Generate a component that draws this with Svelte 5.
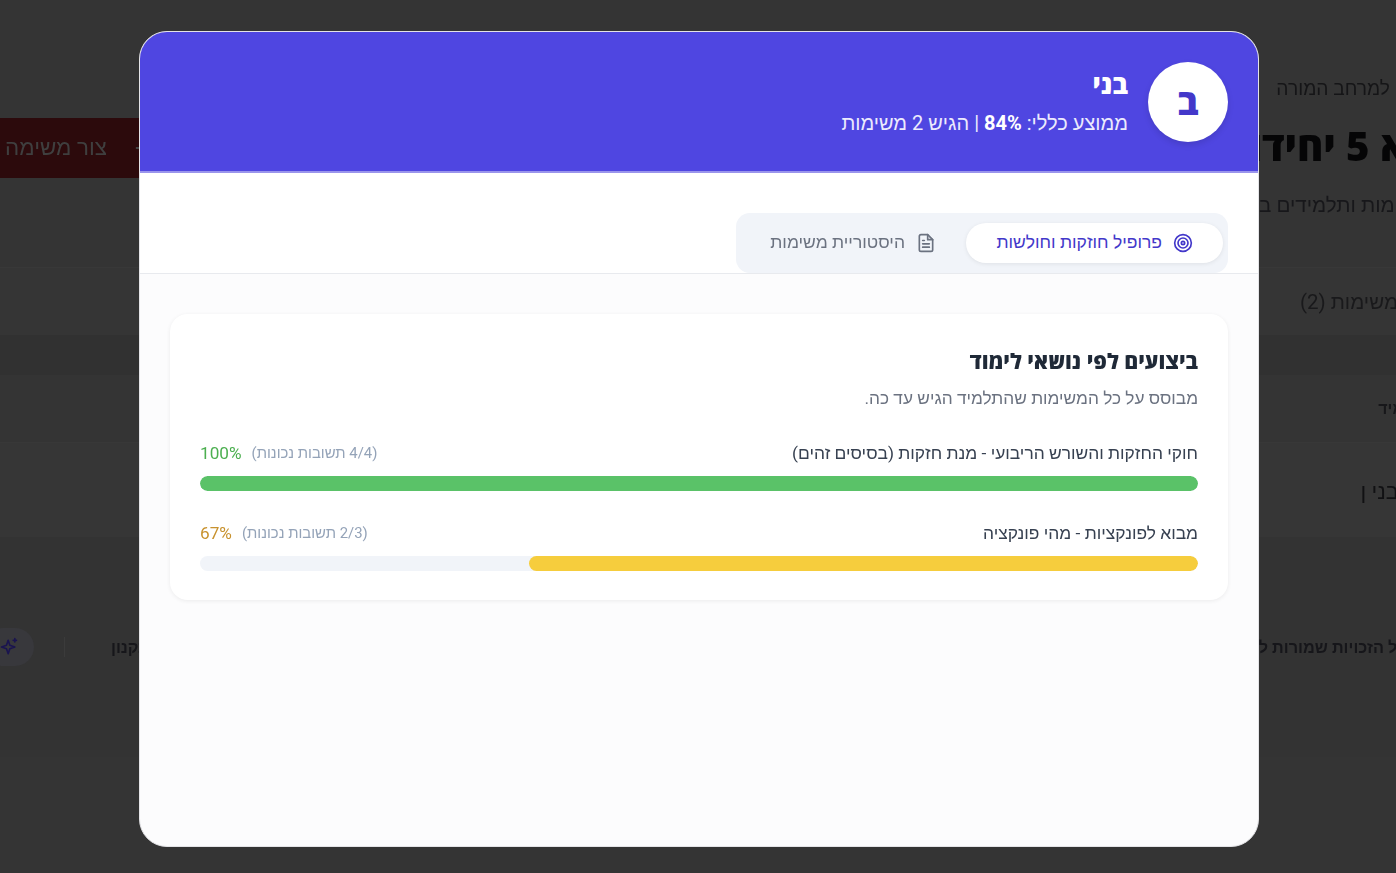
<script>
  const topics = [
    { name: "חוקי החזקות והשורש הריבועי - מנת חזקות (בסיסים זהים)", done: "4/4", pct: 100, tone: "good" },
    { name: "מבוא לפונקציות - מהי פונקציה", done: "2/3", pct: 67, tone: "mid" }
  ];
</script>

<div class="page" dir="rtl">
  <div class="back">למרחב המורה</div>
  <div class="title-row">
    <h1>כיתה יא 5 יחידות</h1>
    <div class="create"><span>צור משימה</span><span class="plus">+</span></div>
  </div>
  <p class="lead">ניהול משימות ותלמידים בכיתה</p>
  <div class="page-tabs">משימות (2)</div>
  <div class="strip"></div>
  <div class="table-head">תלמיד</div>
  <div class="table-row">בני ן</div>
  <div class="footer">
    <span class="rights">כל הזכויות שמורות ל</span>
    <div class="footer-links">
      <span>תקנון</span>
      <i class="sep"></i>
      <span class="spark">
        <svg viewBox="0 0 24 24" width="20" height="20" fill="none" stroke="currentColor" stroke-width="2" stroke-linejoin="round" stroke-linecap="round">
          <path d="M11 4l2 6 6 2-6 2-2 6-2-6-6-2 6-2z" />
          <path d="M19 2v4M17 4h4" />
        </svg>
      </span>
    </div>
  </div>
</div>

<div class="overlay" dir="rtl">
  <div class="modal">
    <header class="modal-head">
      <div class="avatar">ב</div>
      <div class="head-text">
        <h2>בני</h2>
        <p>ממוצע כללי: <b>84%</b> | הגיש 2 משימות</p>
      </div>
    </header>

    <div class="tabs-wrap">
      <div class="tabs">
        <div class="tab active">
          <svg viewBox="0 0 24 24" width="20" height="20" fill="none" stroke="currentColor" stroke-width="2">
            <circle cx="12" cy="12" r="10" />
            <circle cx="12" cy="12" r="6" />
            <circle cx="12" cy="12" r="2" />
          </svg>
          <span>פרופיל חוזקות וחולשות</span>
        </div>
        <div class="tab">
          <svg viewBox="0 0 24 24" width="20" height="20" fill="none" stroke="currentColor" stroke-width="2" stroke-linecap="round" stroke-linejoin="round">
            <path d="M14 2H6a2 2 0 0 0-2 2v16a2 2 0 0 0 2 2h12a2 2 0 0 0 2-2V8z" />
            <path d="M14 2v6h6" />
            <path d="M16 13H8M16 17H8M10 9H8" />
          </svg>
          <span>היסטוריית משימות</span>
        </div>
      </div>
    </div>

    <div class="modal-body">
      <section class="card">
        <h3>ביצועים לפי נושאי לימוד</h3>
        <p class="desc">מבוסס על כל המשימות שהתלמיד הגיש עד כה.</p>
        {#each topics as t}
          <div class="topic">
            <div class="topic-row">
              <span class="topic-name">{t.name}</span>
              <span class="topic-score">
                <span class="count">({t.done} תשובות נכונות)</span>
                <span class="pct {t.tone}">{t.pct}%</span>
              </span>
            </div>
            <div class="track"><div class="fill {t.tone}" style="width: {t.pct}%"></div></div>
          </div>
        {/each}
      </section>
    </div>
  </div>
</div>

<style>
  :global(body) {
    margin: 0;
    background: #343434;
    overflow: hidden;
    font-family: Roboto, "Noto Sans", sans-serif;
  }

  .page {
    height: 873px;
    overflow: hidden;
    color: #17171a;
    filter: blur(0.4px);
  }

  .back {
    padding: 78px 6px 0 0;
    font-size: 19.2px;
    line-height: 21px;
    color: #151517;
  }

  .title-row {
    display: flex;
    justify-content: space-between;
    align-items: center;
    height: 60px;
    margin: 19px -122px 0 0;
  }

  h1 {
    margin: 0 0 6px;
    font-family: "Open Sans", sans-serif;
    font-size: 40px;
    font-weight: 800;
    color: #050506;
  }

  .create {
    display: flex;
    align-items: center;
    gap: 20px;
    width: 200px;
    height: 60px;
    box-sizing: border-box;
    justify-content: flex-end;
    background: #2c0a0c;
    color: #3f3f3f;
    font-size: 22.4px;
    font-weight: 500;
  }

  .create span:first-child {
    margin-left: 5px;
    margin-top: -1px;
  }

  .create .plus {
    order: -1;
    font-weight: 400;
    margin-left: 8px;
    color: #444;
  }

  .lead {
    margin: 15px -80px 0 0;
    font-size: 20.6px;
    line-height: 24px;
    color: #17171a;
  }

  .page-tabs {
    margin-top: 50px;
    height: 68px;
    line-height: 68px;
    margin-right: -2px;
    border-top: 1px solid #383838;
    font-size: 20.5px;
    color: #19191b;
    background: #353535;
    box-sizing: border-box;
  }

  .strip {
    height: 40px;
    background: #313131;
  }

  .table-head {
    height: 68px;
    line-height: 68px;
    font-size: 16px;
    font-weight: 700;
    margin-right: -28px;
    background: #343434;
    border-bottom: 1px solid #383838;
    box-sizing: border-box;
    color: #17171a;
  }

  .table-row {
    height: 94px;
    line-height: 98px;
    font-size: 22px;
    margin-right: -3px;
    background: #363636;
    box-sizing: border-box;
    color: #111113;
  }

  .footer {
    display: flex;
    justify-content: space-between;
    align-items: center;
    height: 220px;
    background: #333333;
    color: #16161a;
    font-size: 16.3px;
    font-weight: 700;
    box-sizing: border-box;
  }

  .rights {
    margin-right: -10px;
  }

  .footer-links {
    display: flex;
    align-items: center;
    gap: 46px;
  }

  .sep {
    width: 1px;
    height: 20px;
    margin-left: -16px;
    background: #3b3b3b;
  }

  .spark {
    display: flex;
    align-items: center;
    justify-content: center;
    width: 50px;
    height: 38px;
    border-radius: 19px;
    background: #38383c;
    color: #1a1450;
    margin-left: -16px;
  }

  .overlay {
    position: fixed;
    inset: 0;
    display: flex;
    justify-content: center;
    align-items: flex-start;
    padding: 31px 0 0 2px;
    box-sizing: border-box;
  }

  .modal {
    width: 1120px;
    height: 816px;
    box-sizing: border-box;
    border: 1px solid #e4e4e7;
    border-radius: 28px;
    overflow: hidden;
    background: #fcfcfd;
    display: flex;
    flex-direction: column;
  }

  .modal-head {
    display: flex;
    align-items: center;
    gap: 20px;
    height: 141px;
    flex-shrink: 0;
    box-sizing: border-box;
    padding: 0 30px 0 0;
    background: #4f46e1;
    border-bottom: 2px solid #9a95ec;
    color: #fff;
  }

  .avatar {
    width: 80px;
    height: 80px;
    border-radius: 50%;
    background: #fff;
    color: #4338ca;
    display: flex;
    align-items: center;
    justify-content: center;
    font-family: "Open Sans", sans-serif;
    font-size: 36px;
    font-weight: 800;
    box-shadow: 0 3px 6px rgba(0, 0, 0, 0.12);
  }

  h2 {
    margin: 0 0 12px;
    font-family: "Open Sans", sans-serif;
    font-size: 26.5px;
    line-height: 30px;
    font-weight: 800;
  }

  .head-text p {
    margin: 0;
    font-size: 20px;
    line-height: 24px;
    color: #eceafd;
  }

  .head-text b {
    color: #fff;
  }

  .tabs-wrap {
    display: flex;
    height: 101px;
    flex-shrink: 0;
    box-sizing: border-box;
    padding: 40px 30px 0 0;
    background: #fff;
    border-bottom: 1px solid #e8eaee;
  }

  .tabs {
    display: flex;
    align-items: center;
    gap: 6px;
    width: 492px;
    height: 60px;
    box-sizing: border-box;
    padding: 0 5px;
    border-radius: 14px;
    background: #f1f4f9;
  }

  .tab {
    display: flex;
    align-items: center;
    gap: 11px;
    height: 40px;
    padding: 0 24px;
    font-size: 17.5px;
    white-space: nowrap;
    color: #6b7280;
  }

  .tab span {
    margin-top: -2px;
  }

  .tab.active {
    width: 257px;
    box-sizing: border-box;
    padding: 0 30px;
    border-radius: 20px;
    background: #fff;
    color: #4338ca;
    box-shadow: 0 1px 4px rgba(0, 0, 0, 0.08);
  }

  .modal-body {
    flex: 1;
    padding: 40px 30px;
  }

  .card {
    height: 286px;
    box-sizing: border-box;
    padding: 30px;
    border-radius: 18px;
    background: #fff;
    box-shadow: 0 1px 4px rgba(0, 0, 0, 0.07);
  }

  h3 {
    margin: 0 0 8px;
    font-family: "Open Sans", sans-serif;
    font-size: 21.3px;
    line-height: 34px;
    font-weight: 800;
    color: #1f2937;
  }

  .desc {
    margin: 0 0 31px;
    font-size: 17.3px;
    line-height: 24px;
    color: #6b7280;
  }

  .topic + .topic {
    margin-top: 30px;
  }

  .topic-row {
    display: flex;
    justify-content: space-between;
    align-items: center;
    height: 24px;
    margin-bottom: 11px;
  }

  .topic-name {
    font-size: 17.4px;
    color: #374151;
  }

  .topic-score {
    display: flex;
    align-items: center;
    gap: 10px;
  }

  .count {
    font-size: 14.9px;
    color: #94a3b8;
  }

  .pct {
    font-size: 17.2px;
  }

  .pct.good {
    color: #4caf50;
  }

  .pct.mid {
    color: #c8922e;
  }

  .track {
    height: 15px;
    border-radius: 8px;
    background: #f1f4f9;
    overflow: hidden;
  }

  .fill {
    height: 100%;
    border-radius: 8px;
  }

  .fill.good {
    background: #5ac268;
  }

  .fill.mid {
    background: #f6cd3d;
  }
</style>
